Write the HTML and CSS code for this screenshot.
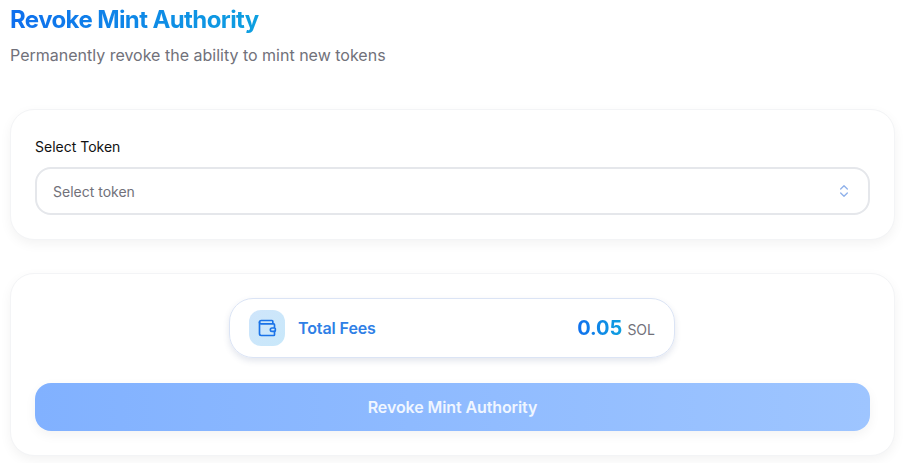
FILE: index.html
```html
<!DOCTYPE html>
<html lang="en">
<head>
    <meta charset="UTF-8">
    <meta name="viewport" content="width=device-width, initial-scale=1.0">
    <title>Revoke Mint Authority</title>
    <link rel="stylesheet" href="styles.css">
</head>
<body>
    <div class="page">
        <h1 class="title">Revoke Mint Authority</h1>
        <p class="subtitle">Permanently revoke the ability to mint new tokens</p>

        <div class="card card-select">
            <label class="field-label">Select Token</label>
            <div class="select-box">
                <span>Select token</span>
                <svg class="chevrons" width="16" height="16" viewBox="0 0 24 24" fill="none" stroke="#8fb1ea" stroke-width="2" stroke-linecap="round" stroke-linejoin="round">
                    <path d="m7 15 5 5 5-5"/>
                    <path d="m7 9 5-5 5 5"/>
                </svg>
            </div>
        </div>

        <div class="card card-fees">
            <div class="fees-pill">
                <div class="fees-left">
                    <div class="wallet-icon">
                        <svg width="20" height="20" viewBox="0 0 24 24" fill="none" stroke="#1a73e8" stroke-width="2" stroke-linecap="round" stroke-linejoin="round">
                            <path d="M19 7V4a1 1 0 0 0-1-1H5a2 2 0 0 0 0 4h15a1 1 0 0 1 1 1v4h-3a2 2 0 0 0 0 4h3a1 1 0 0 0 1-1v-2a1 1 0 0 0-1-1"/>
                            <path d="M3 5v14a2 2 0 0 0 2 2h15a1 1 0 0 0 1-1v-4"/>
                        </svg>
                    </div>
                    <span class="fees-label">Total Fees</span>
                </div>
                <div class="fees-amount">
                    <span class="amount">0.05</span>
                    <span class="unit">SOL</span>
                </div>
            </div>
            <button type="button" class="btn-revoke">Revoke Mint Authority</button>
        </div>
    </div>
</body>
</html>
```

FILE: styles.css
```css
* { box-sizing: border-box; }
html, body { margin: 0; height: 100%; overflow: hidden; }
body { background: #fff; font-family: Inter, "Liberation Sans", sans-serif; }

.page { padding: 4px 9px 0 10px; }

.title {
    margin: 0;
    font-size: 24px;
    line-height: 32px;
    font-weight: 700;
    letter-spacing: -0.6px;
    width: max-content;
    background: linear-gradient(90deg, #0f6fee, #0ea0e0);
    -webkit-background-clip: text;
    background-clip: text;
    color: transparent;
}
.subtitle {
    margin: 7px 0 0;
    font-size: 16px;
    line-height: 24px;
    color: #71717a;
}

.card {
    background: #fff;
    border: 1px solid #f3f4f6;
    border-radius: 24px;
    box-shadow: 0 4px 12px rgba(0, 0, 0, 0.05);
    padding: 24px;
}
.card-select { margin-top: 42px; height: 131px; padding-top: 27px; }
.card-fees { margin-top: 33px; height: 183px; }

.field-label { display: block; font-size: 14px; line-height: 20px; font-weight: 400; color: #111; }
.select-box {
    display: flex;
    align-items: center;
    justify-content: space-between;
    height: 48px;
    margin-top: 10px;
    padding: 0 16px;
    border: 2px solid #e5e7eb;
    border-radius: 16px;
    font-size: 14px;
    color: #71717a;
}

.fees-pill {
    display: flex;
    align-items: center;
    justify-content: space-between;
    width: 446px;
    height: 60px;
    margin-left: 194px;
    padding: 0 19px;
    border: 1px solid #dbe4f5;
    border-radius: 24px;
    box-shadow: 0 3px 6px rgba(60, 80, 130, 0.14);
}
.fees-left { display: flex; align-items: center; gap: 13px; }
.wallet-icon {
    display: flex;
    align-items: center;
    justify-content: center;
    width: 36px;
    height: 36px;
    border-radius: 12px;
    background: linear-gradient(135deg, #cfe5fb, #c8e8fa);
}
.fees-label { font-size: 16px; font-weight: 600; letter-spacing: -0.1px; color: #2f7fe6; }
.fees-amount { display: flex; align-items: baseline; gap: 5px; }
.amount {
    font-size: 20px;
    font-weight: 700;
    background: linear-gradient(90deg, #0f6fee, #0ea0e0);
    -webkit-background-clip: text;
    background-clip: text;
    color: transparent;
}
.unit { font-size: 14px; color: #71717a; }

.btn-revoke {
    display: block;
    width: 100%;
    height: 48px;
    margin-top: 25px;
    border: none;
    border-radius: 16px;
    background: linear-gradient(90deg, #81b1ff, #9ec5ff);
    box-shadow: 0 4px 12px rgba(0, 0, 0, 0.05);
    color: #f0f6ff;
    font-family: inherit;
    font-size: 16px;
    font-weight: 600;
    letter-spacing: -0.1px;
}
```
